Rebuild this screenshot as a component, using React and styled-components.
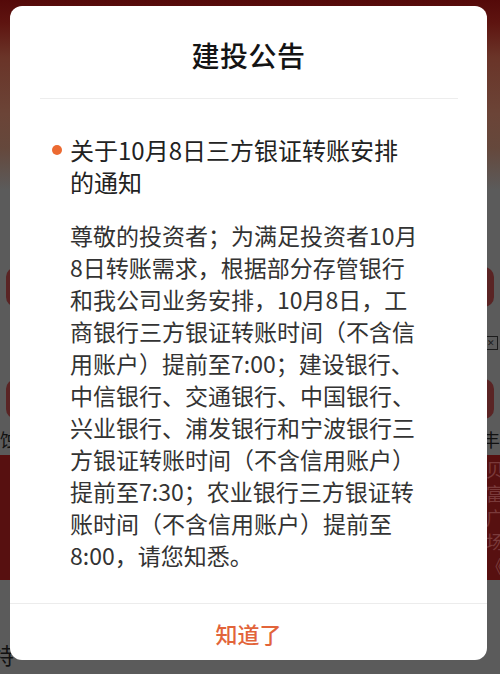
import React from "react";
import styled, { createGlobalStyle } from "styled-components";

const GlobalStyle = createGlobalStyle`
  html, body {
    margin: 0;
    padding: 0;
    background: #5b5b5b;
  }
  body {
    font-family: "Noto Sans CJK SC", "Noto Sans", sans-serif;
  }
`;

const notice = {
  title: "关于10月8日三方银证转账安排的通知",
  body:
    "尊敬的投资者；为满足投资者10月8日转账需求，根据部分存管银行和我公司业务安排，10月8日，工商银行三方银证转账时间（不含信用账户）提前至7:00；建设银行、中信银行、交通银行、中国银行、兴业银行、浦发银行和宁波银行三方银证转账时间（不含信用账户）提前至7:30；农业银行三方银证转账时间（不含信用账户）提前至8:00，请您知悉。",
};

const App = () => {
  return (
    <Screen>
      <GlobalStyle />
      <Page>
        <Header />
        <Section>
          <ActionBar />
          <IconRow>
            <SmallBox>✕</SmallBox>
          </IconRow>
          <ActionBar />
          <LabelRow>
            <span>蚀</span>
            <span>丰</span>
          </LabelRow>
        </Section>
        <Banner>
          <BannerText>
            <span>贝</span>
            <span>富</span>
            <span>广</span>
            <span>场</span>
            <span>《</span>
          </BannerText>
        </Banner>
        <Footer>
          <span>特</span>
          <span>›</span>
        </Footer>
      </Page>

      <Modal>
        <ModalHead>建投公告</ModalHead>
        <HeadRule />
        <ModalBody>
          <NoticeTitle>{notice.title}</NoticeTitle>
          <NoticeText>{notice.body}</NoticeText>
        </ModalBody>
        <ModalFoot>
          <ConfirmButton>知道了</ConfirmButton>
        </ModalFoot>
      </Modal>
    </Screen>
  );
};

export default App;

const Screen = styled.div`
  position: relative;
  width: 500px;
  height: 674px;
  overflow: hidden;
  background: #5b5b5b;
`;

const Page = styled.div`
  display: flex;
  flex-direction: column;
  height: 100%;
`;

const Header = styled.div`
  height: 190px;
  background: linear-gradient(
    180deg,
    #540909 0%,
    #5e1410 12%,
    #6a3428 30%,
    #6b4437 60%,
    #65483c 78%,
    #5b5b5b 100%
  );
`;

const Section = styled.div`
  display: flex;
  flex-direction: column;
  padding: 77px 6px 0;
`;

const ActionBar = styled.div`
  height: 40px;
  border-radius: 10px;
  background: #5a2424;
`;

const IconRow = styled.div`
  display: flex;
  justify-content: flex-end;
  align-items: center;
  height: 72px;
`;

const SmallBox = styled.div`
  width: 12px;
  height: 12px;
  border: 1px solid #1c1c1c;
  font-size: 9px;
  line-height: 12px;
  text-align: center;
  color: #1c1c1c;
  margin-right: -4px;
`;

const LabelRow = styled.div`
  display: flex;
  justify-content: space-between;
  margin: 4px -6px 0;
  height: 32px;
  align-items: center;
  font-size: 18px;
  color: #111;
`;

const Banner = styled.div`
  height: 125px;
  background: #571010;
  display: flex;
  justify-content: flex-end;
`;

const BannerText = styled.div`
  display: flex;
  flex-direction: column;
  font-size: 18px;
  line-height: 24px;
  color: #7a3a3a;
  padding: 2px 0 0;
  margin-right: -4px;
`;

const Footer = styled.div`
  flex: 1;
  display: flex;
  justify-content: space-between;
  align-items: flex-end;
  padding: 0 0 4px;
  font-size: 22px;
  color: #111;
  margin: 0 -6px 0 -8px;

  span:last-child {
    color: #777;
    font-size: 24px;
  }
`;

const Modal = styled.div`
  position: absolute;
  left: 10px;
  top: 6px;
  width: 477px;
  height: 654px;
  background: #fff;
  border-radius: 12px;
  display: flex;
  flex-direction: column;
  overflow: hidden;
`;

const ModalHead = styled.div`
  height: 86px;
  padding-top: 6px;
  display: flex;
  align-items: center;
  justify-content: center;
  font-size: 28px;
  font-weight: 500;
  color: #141414;
  letter-spacing: 0.5px;
`;

const HeadRule = styled.div`
  height: 1px;
  margin: 0 29px 0 30px;
  background: #ededed;
`;

const ModalBody = styled.div`
  flex: 1;
  padding: 35px 0 0 60px;
`;

const NoticeTitle = styled.div`
  position: relative;
  width: 340px;
  font-size: 24px;
  line-height: 32px;
  font-weight: 400;
  color: #222;

  &::before {
    content: "";
    position: absolute;
    left: -18px;
    top: 11px;
    width: 10px;
    height: 10px;
    border-radius: 50%;
    background: #ec6a31;
  }
`;

const NoticeText = styled.div`
  width: 352px;
  margin-top: 21px;
  font-size: 23px;
  line-height: 32px;
  color: #333;
`;

const ModalFoot = styled.div`
  height: 56px;
  border-top: 1px solid #ececec;
  display: flex;
  align-items: center;
  justify-content: center;
`;

const ConfirmButton = styled.button`
  border: none;
  background: transparent;
  padding: 0;
  font-family: inherit;
  font-size: 22px;
  font-weight: 500;
  color: #e2643a;
  margin-top: 2px;
`;
